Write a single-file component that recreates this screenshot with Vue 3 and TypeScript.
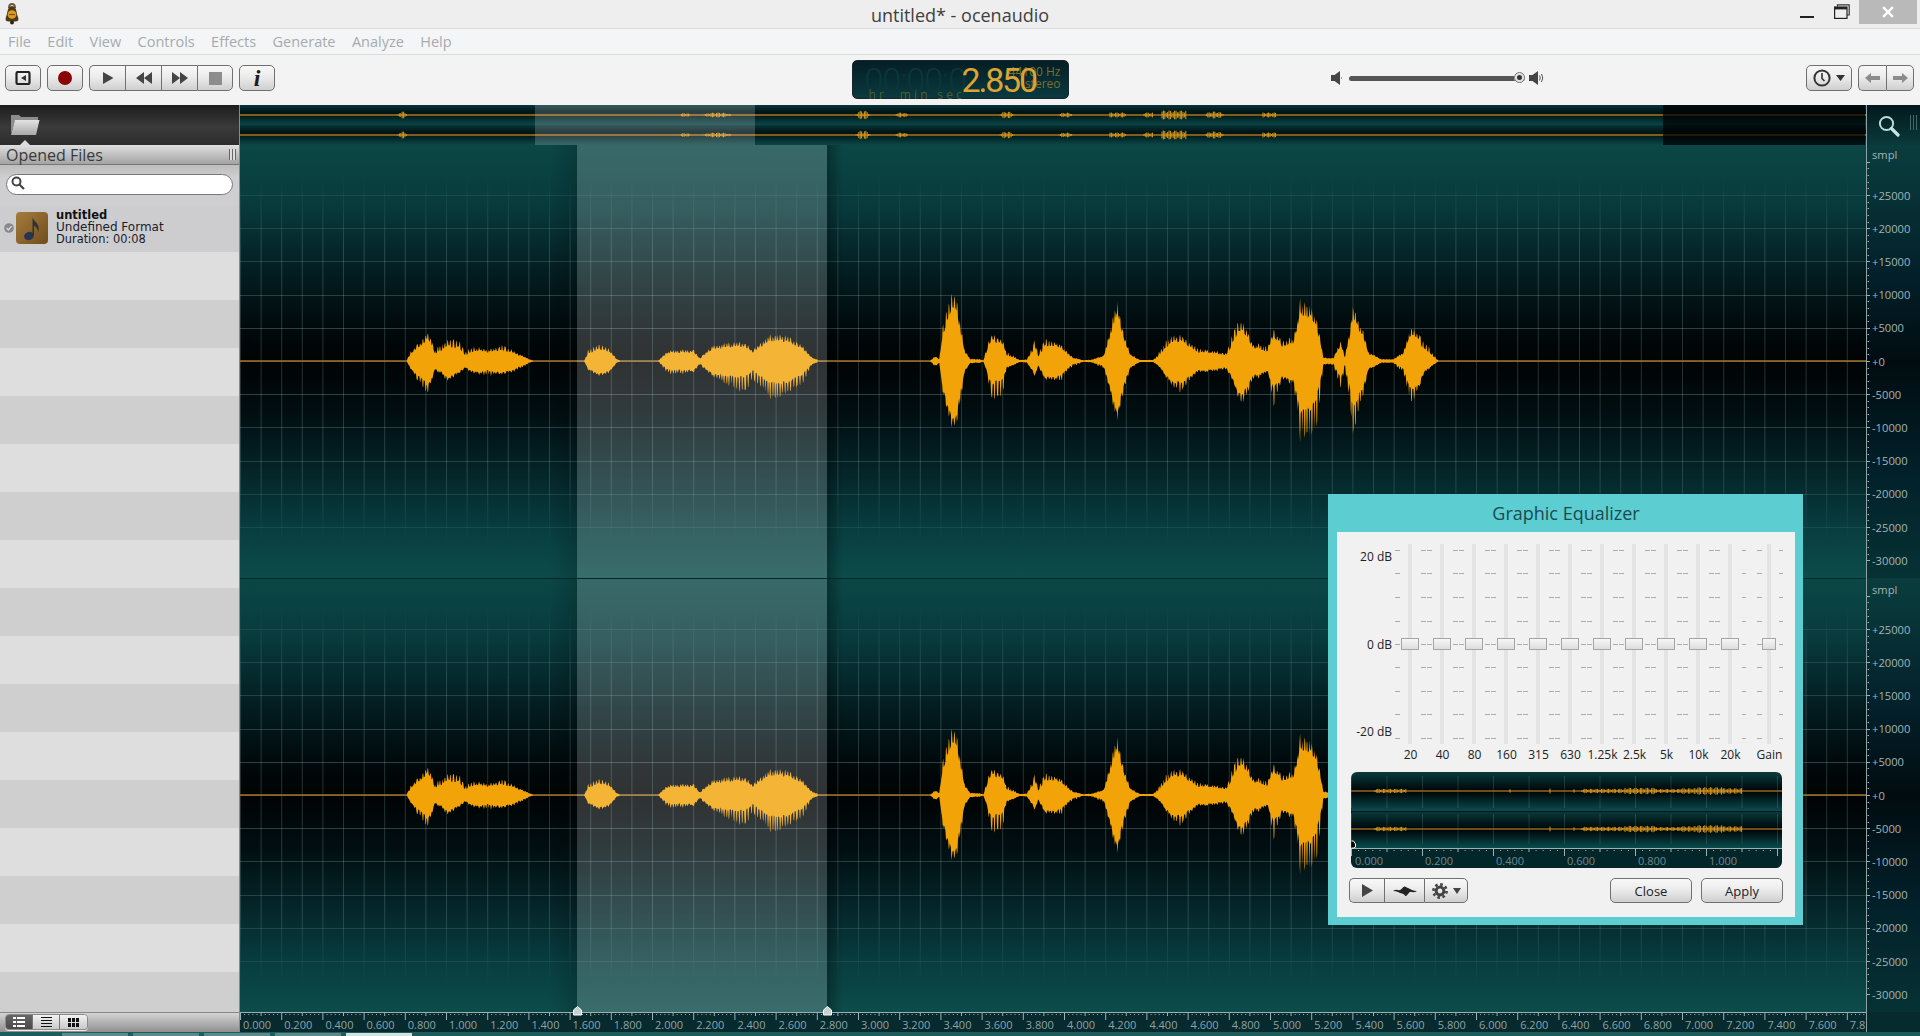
<script setup lang="ts">
const menus = ['File', 'Edit', 'View', 'Controls', 'Effects', 'Generate', 'Analyze', 'Help']
const stripes = Array.from({ length: 16 }, (_, i) => i)
const bands = ['20', '40', '80', '160', '315', '630', '1.25k', '2.5k', '5k', '10k', '20k']

const C1 = 216
const C2 = 650
const STEP = 33.2

function conv(pts: number[][], ox: number): number[][] {
  return pts.map((p) => [ox + p[0] / 3, p[1] / 3, p[2] / 3])
}

const segs: number[][][] = [
  conv([[20,0,0],[30,25,20],[60,50,60],[80,72,85],[92,65,65],[105,30,25],[125,45,35],[135,50,50],[150,58,50],[175,58,35],[195,25,20],[225,38,35],[265,30,38],[310,42,35],[345,25,28],[400,0,0]], 400),
  conv([[552,0,0],[565,30,25],[590,42,38],[610,44,40],[635,25,25],[650,6,5],[660,2,2]], 400),
  conv([[775,1,1],[800,25,30],[810,28,35],[880,30,30],[900,8,10],[935,40,40],[1000,50,70],[1030,50,85],[1060,30,50],[1095,60,80],[1120,70,105],[1160,68,85],[1210,40,60],[1235,10,10],[1255,3,3]], 400),
  conv([[30,0,0],[45,14,16],[58,6,5],[70,110,100],[105,198,198],[120,100,110],[135,30,30],[150,6,6],[180,5,5],[190,1,1],[200,40,30],[215,70,100],[245,60,100],[260,25,20],[300,3,3],[320,4,4],[345,55,40],[355,20,15],[375,60,50],[425,45,55],[440,25,25],[460,10,15],[490,2,2],[515,4,4],[550,15,20],[565,60,60],[590,165,165],[610,80,90],[630,20,20],[660,3,3],[700,3,3],[722,30,20],[740,60,50],[780,70,85],[830,35,30],[860,30,30],[920,20,22],[940,85,60],[965,110,120],[1000,45,50],[1045,40,30],[1060,85,125],[1085,55,50],[1120,60,60],[1140,155,200],[1165,155,205],[1190,120,190],[1210,10,10],[1240,8,10],[1262,55,75],[1275,10,15],[1300,145,195],[1330,80,90],[1345,25,25],[1385,5,5],[1420,5,5],[1435,15,20],[1450,25,30],[1475,95,120],[1515,50,30],[1555,1,1]], 920),
]

function interp(seg: number[][], x: number): number[] {
  for (let i = 1; i < seg.length; i++) {
    if (x <= seg[i][0]) {
      const a = seg[i - 1]
      const b = seg[i]
      const t = (x - a[0]) / (b[0] - a[0] || 1)
      return [a[1] + (b[1] - a[1]) * t, a[2] + (b[2] - a[2]) * t]
    }
  }
  const l = seg[seg.length - 1]
  return [l[1], l[2]]
}

function wavePath(cy: number, scale: number): string {
  let out = ''
  for (const seg of segs) {
    const x0 = seg[0][0]
    const x1 = seg[seg.length - 1][0]
    const top: string[] = []
    const bot: string[] = []
    for (let x = x0; x <= x1; x += 0.55) {
      const v = interp(seg, x)
      const phase = (x / 2.7 + 0.4 * Math.sin(x * 0.13)) % 1
      const on = phase < 0.4
      const n = 0.5 + 0.5 * Math.sin(x * 3.71) * Math.sin(x * 0.83)
      const rough = 1.06 + 0.08 * Math.sin(x * 0.9) * Math.sin(x * 0.31 + 1)
      const core = Math.min(v[0], v[1])
      const up = on ? v[0] * (0.96 + 0.12 * n) : Math.max(core * 0.84, v[0] * 0.68)
      const dn = on ? v[1] * (0.96 + 0.12 * n) : Math.max(core * 0.9, v[1] * 0.55)
      const px = (x - 240).toFixed(1)
      top.push(px + ' ' + (cy - up * scale * rough).toFixed(1))
      bot.unshift(px + ' ' + (cy + dn * scale * rough).toFixed(1))
    }
    out += 'M' + top.join('L') + 'L' + bot.join('L') + 'Z'
  }
  return out
}

const wave1 = wavePath(C1, 1)
const wave2 = wavePath(C2, 0.98)

let vp = ''
for (let k = 0; k <= 78; k++) vp += 'M' + (k * 20.6 + 0.5).toFixed(1) + ' 32V398'
let vp2 = ''
for (let k = 0; k <= 78; k++) vp2 += 'M' + (k * 20.6 + 0.5).toFixed(1) + ' 462V838'

interface HLine { y: number; o: number }
const hLines: HLine[] = []
for (let k = -5; k <= 5; k++) {
  const o = 0.3 - Math.abs(k) * 0.04
  hLines.push({ y: Math.round(C1 + k * STEP) + 0.5, o })
  hLines.push({ y: Math.round(C2 + k * STEP) + 0.5, o })
}

function hairs(ranges: number[][], cy: number, ox: number): string {
  let p = ''
  for (const r of ranges) {
    for (let x = r[0]; x <= r[1]; x += 1.4) {
      const t = (x - r[0]) / (r[1] - r[0] || 1)
      const taper = r[3] === 1 ? 1 : Math.sqrt(Math.sin(Math.PI * t) + 0.02)
      const a = r[2] * (0.35 + 0.65 * Math.abs(Math.sin(x * 1.7))) * taper
      p += 'M' + (x - ox).toFixed(1) + ' ' + (cy - a).toFixed(1) + 'V' + (cy + a).toFixed(1)
    }
  }
  return p
}
const ovRanges = [[398,407,3.5],[680,690,2],[704,731,2.5],[856,870,4.5],[895,908,2.5],[1000,1014,3.5],[1059,1073,2.5],[1110,1126,2.5,1],[1144,1153,2.5,1],[1162,1187,4.5,1],[1205,1224,3.5],[1263,1277,2.5,1]]
const ovWave = hairs(ovRanges, 10, 240) + hairs(ovRanges, 30, 240)

const miniBase = [[1375,1407,2.2,1],[1582,1625,2.2,1],[1625,1655,3.2,1],[1655,1680,2,1],[1680,1695,2.8,1],[1695,1722,3.8,1],[1722,1743,2.8,1]]
const miniRanges1 = [[1510,1511,3,1],[1550,1551,3,1],[1574,1575,2,1]].concat(miniBase)
const miniRanges2 = [[1550,1551,3,1],[1574,1575,2,1]].concat(miniBase)
const miniWave = hairs(miniRanges1, 19, 1351) + hairs(miniRanges2, 57, 1351)

let miniGrid = ''
for (let k = 0; k <= 12; k++) {
  const x = (k * 35.5 + 0.5).toFixed(1)
  miniGrid += 'M' + x + ' 4V36M' + x + ' 42V72'
}
let miniTicks = ''
for (let k = 0; k <= 60; k++) {
  const x = k * 7.1 + 0.5
  if (k % 5 === 0) miniTicks += 'M' + x.toFixed(1) + ' 76V' + (k % 10 === 0 ? 84 : 80)
  else miniTicks += 'M' + x.toFixed(1) + ' 78v1'
}
const miniLabels = [
  { x: 4, t: '0.000' }, { x: 74, t: '0.200' }, { x: 145, t: '0.400' },
  { x: 216, t: '0.600' }, { x: 287, t: '0.800' }, { x: 358, t: '1.000' },
]

const yLabels: { y: number; t: string }[] = []
for (const c of [C1, C2]) {
  yLabels.push({ y: c === C1 ? 9 : 444, t: 'smpl' })
  for (let k = -5; k <= 6; k++) {
    const v = -k * 5000
    yLabels.push({ y: c + k * STEP, t: (v >= 0 ? '+' : '-') + Math.abs(v) })
  }
}
let yTicks = ''
for (const c of [C1, C2]) {
  for (let k = -30; k <= 30; k++) {
    const y = Math.round(c + (k * STEP) / 5) + 0.5
    yTicks += k % 5 === 0 ? 'M0 ' + y + 'H4' : 'M1.5 ' + y + 'h1.5'
  }
}

const tLabels: { x: number; t: string }[] = []
for (let k = 0; k <= 38; k++) {
  tLabels.push({ x: k * 41.2 + 3, t: (k * 0.2).toFixed(3) })
}
tLabels.push({ x: 39 * 41.2 + 3, t: '7.8' })
let tTicks = ''
for (let k = 0; k < 395; k++) {
  const x = (k * 4.12 + 0.5).toFixed(1)
  if (k % 10 === 0) tTicks += 'M' + x + ' 0V8'
  else if (k % 5 === 0) tTicks += 'M' + x + ' 0V4'
  else tTicks += 'M' + x + ' 2v1'
}

const dbRows = [550, 573, 597, 621, 644, 667, 691, 714, 738]
let dashes = ''
for (const yy of dbRows) {
  const y = yy - 544 + 0.5
  dashes += 'M58 ' + y + 'h5'
  for (let k = 0; k < 10; k++) {
    const a = 84 + k * 32
    dashes += 'M' + a + ' ' + y + 'h5M' + (a + 6) + ' ' + y + 'h5'
  }
  dashes += 'M405 ' + y + 'h4M420 ' + y + 'h5M442 ' + y + 'h4'
}
</script>

<template>
  <div class="app">
    <header class="titlebar">
      <div class="tb-left">
        <svg class="logo" width="16" height="22" viewBox="0 0 16 22">
          <path d="M5 5 Q5 1 8 1 Q11 1 11 5" fill="none" stroke="#6b5a3a" stroke-width="2" />
          <path d="M8 3 C3 4 4 9 2 14 Q0.5 18 4 18.5 L12 18.5 Q15.5 18 14 14 C12 9 13 4 8 3Z" fill="#4a3a18" />
          <ellipse cx="8" cy="11.5" rx="4.4" ry="4.2" fill="#e09a20" />
          <path d="M5 11.5H11" stroke="#7a5212" stroke-width="1.2" />
          <circle cx="8" cy="19.5" r="2" fill="#2b2412" />
        </svg>
      </div>
      <div class="title">untitled* - ocenaudio</div>
      <div class="winbtns">
        <span class="wmin"></span>
        <svg class="wmax" width="16" height="15" viewBox="0 0 16 15">
          <path d="M3.5 2.5V0.8H15.2V11H13" fill="none" stroke="#333" stroke-width="1.2" />
          <rect x="0.6" y="3" width="12.4" height="11.4" fill="none" stroke="#222" stroke-width="1.2" />
          <rect x="0.6" y="3" width="12.4" height="2.4" fill="#222" />
        </svg>
        <div class="wclose">
          <svg width="12" height="12" viewBox="0 0 12 12"><path d="M1.2 1.2L10.8 10.8M10.8 1.2L1.2 10.8" stroke="#fff" stroke-width="2.4" /></svg>
        </div>
      </div>
    </header>

    <nav class="menubar">
      <span v-for="m in menus" :key="m" class="menu-item">{{ m }}</span>
    </nav>

    <div class="toolbar">
      <div class="tools">
        <button class="btn single">
          <svg width="16" height="14" viewBox="0 0 16 14"><rect x="1.5" y="1" width="13" height="12" rx="1.5" fill="none" stroke="#222" stroke-width="2.2" /><path d="M11 4V10L6 7Z" fill="#333" /></svg>
        </button>
        <button class="btn single">
          <svg width="16" height="16" viewBox="0 0 16 16"><circle cx="8" cy="8" r="7" fill="#8a0505" /></svg>
        </button>
        <div class="group">
          <button class="btn seg"><svg width="12" height="14" viewBox="0 0 12 14"><path d="M1 1L11.5 7L1 13Z" fill="#444" /></svg></button>
          <button class="btn seg"><svg width="16" height="12" viewBox="0 0 16 12"><path d="M8 0V12L0 6ZM16 0V12L8 6Z" fill="#444" /></svg></button>
          <button class="btn seg"><svg width="16" height="12" viewBox="0 0 16 12"><path d="M0 0V12L8 6ZM8 0V12L16 6Z" fill="#444" /></svg></button>
          <button class="btn seg"><svg width="13" height="13" viewBox="0 0 13 13"><rect width="13" height="13" fill="#8c8c8c" /></svg></button>
        </div>
        <button class="btn single info">i</button>
      </div>

      <div class="lcd">
        <span class="lcd-ghost">00:00:0</span>
        <span class="lcd-rate">44100 Hz</span>
        <span class="lcd-chan">stereo</span>
        <span class="lcd-time">2.850</span>
        <span class="lcd-unit">hr &nbsp;min sec</span>
      </div>

      <div class="tb-right">
        <div class="volume">
          <svg width="12" height="14" viewBox="0 0 12 14"><path d="M0 4H3.5L9 0V14L3.5 10H0Z" fill="#444" /><path d="M10.5 6.5v1" stroke="#444" /></svg>
          <div class="vol-track"><span class="vol-thumb"></span></div>
          <svg width="16" height="14" viewBox="0 0 16 14"><path d="M0 4H3.5L9 0V14L3.5 10H0Z" fill="#444" /><path d="M10.5 4.5Q12 7 10.5 9.5M12.5 3Q15 7 12.5 11" fill="none" stroke="#555" /></svg>
        </div>
        <div class="tb-right-btns">
          <button class="btn clock">
            <svg width="18" height="18" viewBox="0 0 18 18"><circle cx="9" cy="9" r="7.6" fill="none" stroke="#333" stroke-width="2" /><path d="M9 4V9.5L11.5 12" fill="none" stroke="#333" stroke-width="1.6" /></svg>
            <svg width="9" height="6" viewBox="0 0 9 6"><path d="M0 0H9L4.5 6Z" fill="#333" /></svg>
          </button>
          <div class="group">
            <button class="btn seg nav"><svg width="15" height="10" viewBox="0 0 15 10"><path d="M0 5L6 0V3H15V7H6V10Z" fill="#8b8b8b" /></svg></button>
            <button class="btn seg nav"><svg width="15" height="10" viewBox="0 0 15 10"><path d="M15 5L9 0V3H0V7H9V10Z" fill="#8b8b8b" /></svg></button>
          </div>
        </div>
      </div>
    </div>

    <main class="main">
      <aside class="sidebar">
        <div class="side-head">
          <svg width="30" height="23" viewBox="0 0 30 23">
            <defs><linearGradient id="fold" x1="0" y1="0" x2="0" y2="1"><stop offset="0" stop-color="#e2e2e2" /><stop offset="1" stop-color="#a9a9a9" /></linearGradient></defs>
            <path d="M1 21V2H9L11 4H28V8H5Z" fill="#8d8d8d" />
            <path d="M5 7H29.5L26 22H1Z" fill="url(#fold)" />
          </svg>
          <span class="notch"></span>
        </div>
        <div class="side-title">
          <span>Opened Files</span>
          <span class="grip"></span>
        </div>
        <div class="side-search">
          <svg width="14" height="14" viewBox="0 0 14 14"><circle cx="5.5" cy="5.5" r="4" fill="none" stroke="#444" stroke-width="2" /><path d="M8.5 8.5L13 13" stroke="#444" stroke-width="2.2" /></svg>
          <input class="search-input" aria-label="Search" />
        </div>
        <div class="file-row">
          <svg class="check" width="10" height="10" viewBox="0 0 10 10"><circle cx="5" cy="5" r="4.8" fill="#888" /><path d="M2.6 5L4.4 7L7.5 3.2" fill="none" stroke="#ddd" stroke-width="1.2" /></svg>
          <svg class="note" width="32" height="32" viewBox="0 0 32 32">
            <defs><linearGradient id="noteb" x1="0" y1="0" x2="1" y2="1"><stop offset="0" stop-color="#a57d3c" /><stop offset="1" stop-color="#6f4d1e" /></linearGradient></defs>
            <rect width="32" height="32" rx="4" fill="url(#noteb)" />
            <ellipse cx="13" cy="24" rx="5" ry="4" fill="#2a3350" transform="rotate(-20 13 24)" />
            <path d="M16.5 24V5.5C18 10 24 11 22.5 20C21.5 16 19 14 18 13.5V24Z" fill="#2f3038" />
          </svg>
          <div class="file-text">
            <strong>untitled</strong>
            <span>Undefined Format</span>
            <span class="dur">Duration: 00:08</span>
          </div>
        </div>
        <div class="stripes">
          <div v-for="i in stripes" :key="i" class="stripe" :class="{ dark: i % 2 === 1 }"></div>
        </div>
        <div class="side-foot">
          <div class="viewbtns">
            <button class="vbtn on">
              <svg width="12" height="10" viewBox="0 0 12 10"><path d="M0 0h3v2H0zM4 0h8v2H4zM0 4h3v2H0zM4 4h8v2H4zM0 8h3v2H0zM4 8h8v2H4z" fill="#fff" /></svg>
            </button>
            <button class="vbtn">
              <svg width="11" height="10" viewBox="0 0 11 10"><path d="M0 .5h11M0 3.5h11M0 6.5h11M0 9.5h11" stroke="#111" /></svg>
            </button>
            <button class="vbtn">
              <svg width="11" height="9" viewBox="0 0 11 9"><path d="M0 0h3v4H0zM4 0h3v4H4zM8 0h3v4H8zM0 5h3v4H0zM4 5h3v4H4zM8 5h3v4H8z" fill="#111" /></svg>
            </button>
          </div>
        </div>
      </aside>

      <section class="editor">
        <svg class="overview" width="1626" height="40" viewBox="0 0 1626 40">
          <defs>
            <linearGradient id="ovg" x1="0" y1="0" x2="0" y2="1">
              <stop offset="0" stop-color="#07363a" /><stop offset="0.35" stop-color="#001416" /><stop offset="0.5" stop-color="#00171a" /><stop offset="0.98" stop-color="#0a4646" />
            </linearGradient>
          </defs>
          <rect width="1626" height="20" fill="url(#ovg)" />
          <rect y="20" width="1626" height="20" fill="url(#ovg)" />
          <path d="M0 10H1626M0 30H1626" stroke="#7c5d1c" stroke-width="2" />
          <path :d="ovWave" stroke="#d99a1c" stroke-width="1" />
          <rect x="295" width="220" height="40" fill="#fff" opacity="0.18" />
          <rect x="1423" width="202" height="40" fill="#000" opacity="0.72" />
        </svg>

        <div class="corner">
          <svg width="22" height="22" viewBox="0 0 22 22"><circle cx="8.5" cy="8.5" r="6.6" fill="none" stroke="#b9dada" stroke-width="2" /><path d="M13.5 13.5L20 20" stroke="#c9e2e2" stroke-width="3.2" stroke-linecap="round" /></svg>
          <span class="corner-grip"></span>
        </div>

        <svg class="canvas" width="1626" height="867" viewBox="0 0 1626 867">
          <defs>
            <linearGradient id="chan" x1="0" y1="0" x2="0" y2="1">
              <stop offset="0" stop-color="#0b4746" /><stop offset="0.14" stop-color="#083a3c" /><stop offset="0.3" stop-color="#031c20" /><stop offset="0.42" stop-color="#000a0c" /><stop offset="0.5" stop-color="#000304" /><stop offset="0.62" stop-color="#010e11" /><stop offset="0.74" stop-color="#042226" /><stop offset="0.88" stop-color="#083c3e" /><stop offset="1" stop-color="#0c4c4a" />
            </linearGradient>
            <linearGradient id="vf1" gradientUnits="userSpaceOnUse" x1="0" y1="32" x2="0" y2="398">
              <stop offset="0" stop-color="#b5dce0" stop-opacity="0" /><stop offset="0.2" stop-color="#b5dce0" stop-opacity="0.2" /><stop offset="0.8" stop-color="#b5dce0" stop-opacity="0.2" /><stop offset="1" stop-color="#b5dce0" stop-opacity="0" />
            </linearGradient>
            <linearGradient id="vf2" gradientUnits="userSpaceOnUse" x1="0" y1="462" x2="0" y2="838">
              <stop offset="0" stop-color="#b5dce0" stop-opacity="0" /><stop offset="0.2" stop-color="#b5dce0" stop-opacity="0.2" /><stop offset="0.8" stop-color="#b5dce0" stop-opacity="0.2" /><stop offset="1" stop-color="#b5dce0" stop-opacity="0" />
            </linearGradient>
            <linearGradient id="shL"><stop offset="0" stop-color="#000" stop-opacity="0" /><stop offset="1" stop-color="#000" stop-opacity="0.16" /></linearGradient>
            <linearGradient id="shR"><stop offset="0" stop-color="#000" stop-opacity="0.3" /><stop offset="1" stop-color="#000" stop-opacity="0" /></linearGradient>
          </defs>
          <rect width="1626" height="433" fill="url(#chan)" />
          <rect y="433" width="1626" height="434" fill="url(#chan)" />
          <path :d="vp" stroke="url(#vf1)" fill="none" />
          <path :d="vp2" stroke="url(#vf2)" fill="none" />
          <line v-for="h in hLines" :key="h.y" x1="0" x2="1626" :y1="h.y" :y2="h.y" stroke="#b5dce0" :stroke-opacity="h.o" />
          <rect x="309" width="28" height="867" fill="url(#shL)" />
          <rect x="587" width="16" height="867" fill="url(#shR)" />
          <path :d="'M0 ' + C1 + 'H1626M0 ' + C2 + 'H1626'" stroke="#a07427" stroke-width="1.6" />
          <path :d="wave1" fill="#f2a308" />
          <path :d="wave2" fill="#f2a308" />
          <rect x="337" width="250" height="867" fill="#fff" opacity="0.19" />
          <line x1="0" x2="1626" y1="433.5" y2="433.5" stroke="#03272a" />
        </svg>

        <svg class="yruler" width="54" height="867" viewBox="0 0 54 867">
          <defs>
            <linearGradient id="ych" x1="0" y1="0" x2="0" y2="1">
              <stop offset="0" stop-color="#0a3d3e" /><stop offset="0.3" stop-color="#03202a" /><stop offset="0.5" stop-color="#010c10" /><stop offset="0.75" stop-color="#02202a" /><stop offset="1" stop-color="#063234" />
            </linearGradient>
          </defs>
          <rect width="54" height="433" fill="url(#ych)" />
          <rect y="433" width="54" height="434" fill="url(#ych)" />
          <path d="M0.5 0V867" stroke="#8ba3a5" />
          <path :d="yTicks" stroke="#9cb2b3" fill="none" />
          <text v-for="l in yLabels" :key="l.t + l.y" class="ytext" x="6" :y="l.y + 4.5">{{ l.t }}</text>
        </svg>

        <svg class="truler" width="1626" height="20" viewBox="0 0 1626 20">
          <rect width="1626" height="20" fill="#062a2e" />
          <path d="M0 0.5H1626" stroke="#9db1b2" />
          <path :d="tTicks" stroke="#9db1b2" fill="none" />
          <text v-for="t in tLabels" :key="t.t" class="ttext" :x="t.x" y="17">{{ t.t }}</text>
          <path d="M333.5 3V-2L337.5 -5.5L341.5 -2V3Z" fill="#c8d0d0" stroke="#fff" />
          <path d="M583.5 3V-2L587.5 -5.5L591.5 -2V3Z" fill="#c8d0d0" stroke="#fff" />
        </svg>
        <div class="truler-corner"></div>

        <div class="eq">
          <div class="eq-title">Graphic Equalizer</div>
          <div class="eq-panel">
            <div class="eq-sliders">
              <svg class="eq-dashes" width="458" height="200" viewBox="0 0 458 200"><path :d="dashes" stroke="#ababab" fill="none" /></svg>
              <div class="eq-scale">
                <span>20 dB</span><span>0 dB</span><span>-20 dB</span>
              </div>
              <div v-for="b in bands" :key="b" class="band">
                <div class="track"><span class="handle"></span></div>
                <span class="band-label">{{ b }}</span>
              </div>
              <div class="band gain">
                <div class="track"><span class="handle small"></span></div>
                <span class="band-label">Gain</span>
              </div>
            </div>
            <svg class="mini" width="431" height="96" viewBox="0 0 431 96">
              <defs>
                <linearGradient id="mg" x1="0" y1="0" x2="0" y2="1">
                  <stop offset="0" stop-color="#0a3c3c" /><stop offset="0.3" stop-color="#011a1c" /><stop offset="0.5" stop-color="#000304" /><stop offset="0.75" stop-color="#03282a" /><stop offset="1" stop-color="#0b4c4e" />
                </linearGradient>
              </defs>
              <rect width="431" height="39" fill="url(#mg)" />
              <rect y="39" width="431" height="37" fill="url(#mg)" />
              <rect y="76" width="431" height="20" fill="#03262a" />
              <path :d="miniGrid" stroke="#b5dce0" stroke-opacity="0.16" fill="none" />
              <path d="M0 19H431M0 57H431" stroke="#8d6a22" stroke-width="1.4" />
              <path :d="miniWave" stroke="#d99a1c" fill="none" />
              <path d="M0 39.5H431" stroke="#02181a" />
              <path d="M0 76.5H431" stroke="#9db1b2" />
              <path :d="miniTicks" stroke="#9db1b2" fill="none" />
              <path d="M0.5 69H2.5L4.5 72V75L2.5 76H0.5" fill="#000" stroke="#fff" />
              <text v-for="l in miniLabels" :key="l.t" class="mtext" :x="l.x" y="93">{{ l.t }}</text>
            </svg>
            <div class="eq-actions">
              <div class="group eq-group">
                <button class="btn seg e1"><svg width="11" height="13" viewBox="0 0 11 13"><path d="M0 0L11 6.5L0 13Z" fill="#444" /></svg></button>
                <button class="btn seg e2"><svg width="24" height="10" viewBox="0 0 24 10"><path d="M0 5Q3 3 5 4T9 2.5T12 0.5T15 2T19 4T24 5Q21 7 19 6T15 8T12 9.5T9 7.5T5 6T0 5Z" fill="#222" /></svg></button>
                <button class="btn seg e3">
                  <svg width="16" height="16" viewBox="0 0 16 16"><circle cx="8" cy="8" r="3.9" fill="none" stroke="#444" stroke-width="3" /><circle cx="8" cy="8" r="6.6" fill="none" stroke="#444" stroke-width="2.6" stroke-dasharray="2.6 2.58" /></svg>
                  <svg width="8" height="6" viewBox="0 0 8 6"><path d="M0 0H8L4 6Z" fill="#444" /></svg>
                </button>
              </div>
              <div class="eq-spacer"></div>
              <button class="btn text">Close</button>
              <button class="btn text">Apply</button>
            </div>
          </div>
        </div>
      </section>
    </main>

    <div class="taskstrip">
      <span class="tab"></span><span class="tab"></span><span class="tab"></span><span class="tab"></span><span class="tab active"></span>
    </div>
  </div>
</template>

<style>
html, body { margin: 0; padding: 0; background: #1c5c5a; }
</style>

<style scoped>
.app {
  width: 1920px;
  height: 1036px;
  display: flex;
  flex-direction: column;
  overflow: hidden;
  font-family: "Open Sans", "Liberation Sans", sans-serif;
  background: #f3f3f3;
}
button { font-family: inherit; padding: 0; margin: 0; cursor: default; }
svg { display: block; }

.titlebar {
  height: 28px;
  flex: none;
  display: grid;
  grid-template-columns: 1fr auto 1fr;
  background: #eeeeef;
  border-bottom: 1px solid #dadbdc;
}
.tb-left { padding: 3px 0 0 4px; }
.title { font-size: 18px; line-height: 30px; color: #404040; }
.winbtns { display: flex; justify-content: flex-end; align-items: flex-start; padding-right: 3px; }
.wmin { width: 14px; height: 2px; background: #222; margin: 16px 20px 0 0; }
.wmax { margin: 4px 9px 0 0; }
.wclose { width: 58px; height: 24px; background: #b9b9b9; display: flex; align-items: center; justify-content: center; }

.menubar {
  height: 25px;
  flex: none;
  display: flex;
  gap: 16.4px;
  padding-left: 8px;
  align-items: center;
  background: #f4f5f6;
  border-bottom: 1px solid #dcdddd;
}
.menu-item { font-size: 14.5px; color: #a6abaf; }

.toolbar {
  height: 50px;
  flex: none;
  display: grid;
  grid-template-columns: 1fr 217px 1fr;
  background: #f3f3f3;
}
.tools { display: flex; gap: 6px; padding: 10px 0 0 5px; align-items: flex-start; }
.btn {
  height: 26px;
  border: 1px solid #707070;
  border-radius: 5px;
  background: linear-gradient(#f8f8f8, #ececec 45%, #cfcfcf);
  display: flex;
  align-items: center;
  justify-content: center;
}
.single { width: 36px; }
.info { font: italic bold 24px "Liberation Serif", serif; color: #1c1c1c; line-height: 24px; }
.group { display: flex; height: 26px; }
.seg { width: 36px; border-radius: 0; border-right-width: 0; }
.seg:first-child { border-radius: 5px 0 0 5px; }
.seg:last-child { border-radius: 0 5px 5px 0; border-right-width: 1px; }

.lcd {
  position: relative;
  width: 217px;
  height: 39px;
  margin-top: 5px;
  border-radius: 5px;
  background: linear-gradient(#041e24, #0a3a40);
  border: 1px solid #17262a;
  box-sizing: border-box;
  white-space: nowrap;
}
.lcd-ghost { position: absolute; left: 12px; top: -1px; font: 300 34px Roboto, sans-serif; color: #0b3739; letter-spacing: -1px; }
.lcd-time { position: absolute; left: 109px; top: -1px; font: 400 34px Roboto, sans-serif; color: #dba436; letter-spacing: -2.2px; }
.lcd-rate { position: absolute; right: 7px; top: 4px; font-size: 12px; line-height: 14px; color: #76702f; }
.lcd-chan { position: absolute; right: 7px; top: 16px; font-size: 12px; line-height: 14px; color: #76702f; }
.lcd-unit { position: absolute; left: 16px; top: 27px; font-size: 12px; line-height: 14px; letter-spacing: 3.2px; color: #4f5f2c; }

.tb-right { display: flex; justify-content: space-between; align-items: flex-start; padding-top: 10px; padding-right: 6px; }
.volume { display: flex; align-items: center; margin-left: 262px; height: 26px; }
.vol-track {
  position: relative;
  width: 176px;
  height: 5px;
  margin: 0 4px 0 6px;
  border-radius: 3px;
  background: #555;
}
.vol-thumb {
  position: absolute;
  right: 0;
  top: -4px;
  width: 11px;
  height: 11px;
  box-sizing: border-box;
  border-radius: 50%;
  border: 3px solid #e4e4e4;
  outline: 1px solid #777;
  outline-offset: -1px;
  background: #333;
}
.tb-right-btns { display: flex; gap: 6px; }
.clock { width: 46px; gap: 5px; }
.nav { width: 28px; }

.main { flex: 1; min-height: 0; display: flex; }
.sidebar { width: 240px; flex: none; display: flex; flex-direction: column; border-right: 1px solid #888; box-sizing: border-box; }
.side-head {
  position: relative;
  height: 40px;
  flex: none;
  padding: 8px 0 0 10px;
  box-sizing: border-box;
  background: linear-gradient(#1d1d1d, #3a3a3a 55%, #2c2c2c);
}
.notch { position: absolute; left: 20px; bottom: 0; border: 5px solid transparent; border-top-width: 0; border-bottom-color: #dcdcdc; }
.side-title {
  height: 20px;
  flex: none;
  display: flex;
  justify-content: space-between;
  align-items: center;
  padding: 0 3px 0 6px;
  font-size: 16px;
  color: #3a3a3a;
  background: linear-gradient(#dfdfdf, #a3a3a3);
  border-bottom: 1px solid #777;
  box-sizing: border-box;
}
.grip { width: 7px; height: 11px; background: repeating-linear-gradient(90deg, #666 0 1px, #ddd 1px 3px); }
.side-search {
  height: 41px;
  flex: none;
  box-sizing: border-box;
  margin: 0;
  padding: 7px 6px 13px;
  position: relative;
  background: linear-gradient(#bdbdbd, #cfcfd1 30%);
}
.side-search svg { position: absolute; left: 11px; top: 11px; }
.search-input {
  width: 100%;
  height: 21px;
  box-sizing: border-box;
  border: 1px solid #777;
  border-radius: 11px;
  background: #fff;
  outline: none;
}
.file-row {
  height: 46px;
  flex: none;
  display: flex;
  align-items: flex-start;
  background: #cdcdcf;
}
.check { margin: 17px 2px 0 4px; flex: none; }
.note { margin: 6px 8px 0 0; flex: none; }
.file-text { display: flex; flex-direction: column; padding-top: 3px; font: 12px/12px "DejaVu Sans", sans-serif; color: #1c1c2a; }
.file-text strong { color: #111; font-size: 11.5px; }
.dur { font-size: 11.4px; }
.stripes { flex: 1; min-height: 0; overflow: hidden; }
.stripe { height: 48px; background: #dededf; }
.stripe.dark { background: #cfcfcf; }
.side-foot {
  height: 20px;
  flex: none;
  box-sizing: border-box;
  border-top: 1px solid #888;
  padding: 1px 0 0 5px;
  background: linear-gradient(#d4d4d4, #8f8f8f);
}
.viewbtns { display: flex; height: 16px; width: 83px; border: 1px solid #8a8a8a; border-radius: 4px; overflow: hidden; box-sizing: border-box; box-shadow: 0 1px 0 #eee; }
.vbtn { width: 27px; flex: none; border: 0; border-right: 1px solid #777; background: linear-gradient(#f2f2f2, #c9c9c9); display: flex; align-items: center; justify-content: center; }
.vbtn:last-child { border-right: 0; flex: 1; }
.vbtn.on { background: linear-gradient(#666, #4a4a4a); }

.editor {
  position: relative;
  flex: 1;
  min-width: 0;
  display: grid;
  grid-template-columns: 1626px 54px;
  grid-template-rows: 40px 867px 20px;
  background: #062a2e;
}
.corner {
  display: flex;
  align-items: flex-start;
  justify-content: space-between;
  padding: 10px 3px 0 11px;
  background: linear-gradient(#02181c, #0a3a3b);
  border-left: 1px solid #8ba3a5;
  box-sizing: border-box;
}
.corner-grip { width: 7px; height: 15px; background: repeating-linear-gradient(90deg, #45696a 0 1px, transparent 1px 3px); }
.ytext { font: 11.2px "Open Sans", sans-serif; fill: #a2b4b5; }
.ttext { font: 11px "Open Sans", sans-serif; fill: #8ea3a5; }
.truler { overflow: visible; }
.truler-corner { background: #062a2e; border-left: 1px solid #8ba3a5; box-sizing: border-box; }

.eq {
  position: absolute;
  left: 1088px;
  top: 389px;
  width: 475px;
  height: 431px;
  box-sizing: border-box;
  padding: 0 8px 8px 9px;
  background: #5ccdd0;
  display: flex;
  flex-direction: column;
}
.eq-title { height: 38px; flex: none; display: flex; align-items: center; justify-content: center; font-size: 18px; color: #1b4a50; }
.eq-panel {
  flex: 1;
  background: #f1f1f1;
  padding: 12px 13px 14px 14px;
  display: flex;
  flex-direction: column;
  gap: 10px;
}
.eq-sliders { position: relative; display: flex; margin-left: -14px; height: 218px; flex: none; }
.eq-dashes { position: absolute; left: 0; top: 0; }
.eq-scale {
  width: 57px;
  height: 200px;
  flex: none;
  box-sizing: border-box;
  padding: 5px 2px 4px 0;
  display: flex;
  flex-direction: column;
  align-items: flex-end;
  justify-content: space-between;
  font-size: 12px;
  line-height: 16px;
  color: #222;
}
.band { position: relative; width: 32px; flex: none; display: flex; flex-direction: column; align-items: center; }
.gain { margin-left: 7px; }
.track { position: relative; width: 4px; height: 200px; background: #e3e3e3; flex: none; }
.handle {
  position: absolute;
  left: -7px;
  top: 94px;
  width: 18px;
  height: 12px;
  box-sizing: border-box;
  border: 1px solid #a6a6a6;
  background: linear-gradient(#f6f6f6, #dddddd);
}
.handle.small { width: 14px; left: -5px; }
.band-label { font-size: 12px; line-height: 22px; padding-left: 1px; color: #222; white-space: nowrap; }
.mini { border-radius: 6px; flex: none; }
.mtext { font: 11px "Open Sans", sans-serif; fill: #72878a; }
.eq-actions { display: flex; gap: 9px; height: 25px; flex: none; margin-left: -2px; margin-right: -1px; }
.eq-group { height: 25px; }
.eq-group .btn { height: 25px; }
.e1 { width: 35px; }
.e2 { width: 40px; }
.e3 { width: 44px; gap: 5px; }
.eq-spacer { flex: 1; }
.text { width: 82px; height: 25px; font-size: 13px; color: #222; }

.taskstrip { height: 4px; flex: none; display: flex; padding-left: 62px; gap: 5px; background: #1c5c5a; }
.tab { width: 66px; height: 3px; margin-top: 1px; background: #5c8a88; }
.tab.active { background: #d3e2e1; }
</style>
